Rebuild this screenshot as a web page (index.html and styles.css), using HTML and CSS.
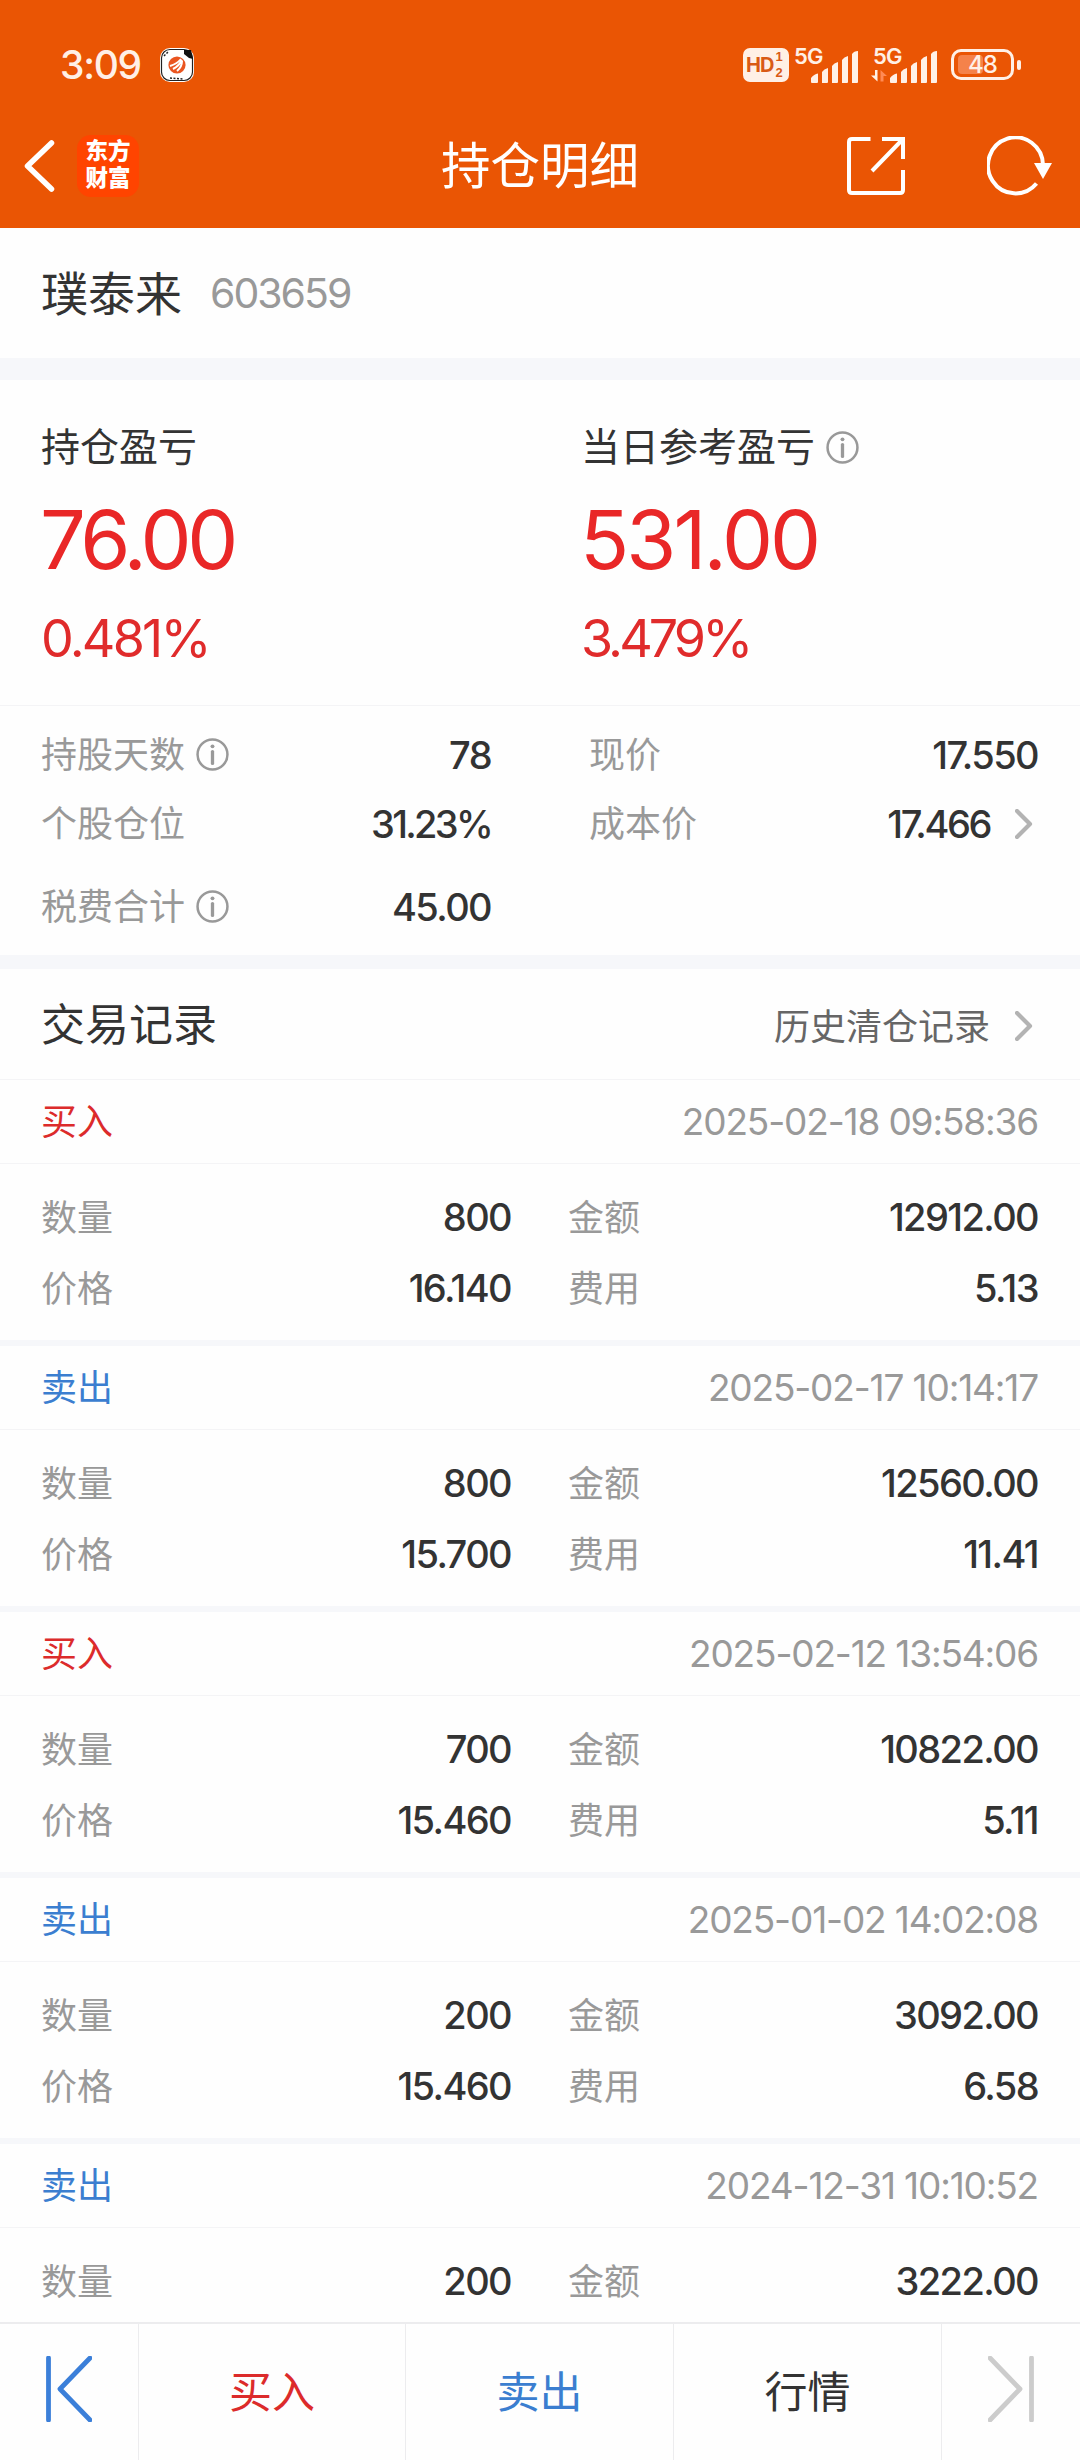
FILE: index.html
```html
<!DOCTYPE html>
<html lang="zh-CN">
<head>
<meta charset="utf-8">
<title>持仓明细</title>
<link rel="stylesheet" href="styles.css">
</head>
<body>
<svg class="defs" width="0" height="0" aria-hidden="true">
  <symbol id="info" viewBox="0 0 34 34"><circle cx="17" cy="17" r="15.4" fill="none" stroke="#999" stroke-width="2.6"/><circle cx="17" cy="8.6" r="2" fill="#999"/><path d="M17 14v12.2" stroke="#999" stroke-width="3.4" stroke-linecap="round"/></symbol>
  <symbol id="chev" viewBox="0 0 18 30"><path d="M2 2l13 13L2 28" fill="none" stroke="#b3b3b3" stroke-width="4.2" stroke-linecap="round" stroke-linejoin="round"/></symbol>
  <symbol id="bars" viewBox="0 0 48 32"><path d="M0 31v-4q3-4 7-4.500v8.500q0 1-1 1h-5q-1 0-1-1zM11 32v-11q2-3 6-4v14q0 1-1 1zM21 32v-17q2-3 6-4v20q0 1-1 1zM31 32v-23q2-3 6-4v26q0 1-1 1zM41 32v-29q2-3 6-3v31q0 1-1 1z" fill="#fff0e6"/></symbol>
</svg>
<div class="screen">
  <header class="top">
    <div class="status">
      <span class="clock">3:09</span>
      <svg class="notice" viewBox="0 0 34 34"><rect x="0" y="0" width="34" height="34" rx="10" fill="#fff"/><rect x="1.500" y="1.500" width="31" height="31" rx="8.500" fill="none" stroke="#222" stroke-width="1.200"/><path d="M24 2l7 0 2 9-4-1-5-4z" fill="#111"/><path d="M4 8l4-4M10 30l14 1" stroke="#222" stroke-width="1.500" stroke-dasharray="2 1.500"/><circle cx="17" cy="17" r="8.600" fill="#ea5520"/><path d="M10 18q7-2 11-7M13 21q6-3 9-9M17 23q5-4 5-10" stroke="#fff" stroke-width="2" fill="none"/></svg>
      <div class="signals">
        <span class="hd"><span>HD</span><span class="sims"><i>1</i><i>2</i></span></span>
        <span class="net"><b>5G</b><svg viewBox="0 0 48 32"><use href="#bars"/></svg></span>
        <span class="net second"><b>5G</b><svg class="updown" viewBox="0 0 16 12"><path d="M6.500 0v11.500L0 5.500h4V0z" fill="#fff0e6"/><path d="M9.500 11.500V0L16 6h-3.500v5.500z" fill="#ff8a55"/></svg><svg viewBox="0 0 48 32"><use href="#bars"/></svg></span>
        <span class="battery"><span class="level"></span><span class="pct">48</span></span><span class="nub"></span>
      </div>
    </div>
    <div class="nav">
      <svg class="back" viewBox="0 0 30 52"><path d="M27 3L3 26l24 23" fill="none" stroke="#fff" stroke-width="5.500" stroke-linecap="round" stroke-linejoin="round"/></svg>
      <span class="brand">东方<br>财富</span>
      <h1>持仓明细</h1>
      <svg class="share" viewBox="0 0 58 58"><path d="M23.500 2H5q-3 0-3 3v48q0 3 3 3h48q3 0 3-3V33M35 2h21v20M56 2L25 34" fill="none" stroke="#fff" stroke-width="4"/></svg>
      <svg class="reload" viewBox="0 0 66 60"><path d="M49.500 47.500A27.500 28 0 1 1 56 29" fill="none" stroke="#fff" stroke-width="4"/><path d="M47 27h18l-9 16z" fill="#fff"/></svg>
    </div>
  </header>

  <section class="stock"><span class="name">璞泰来</span><span class="code">603659</span></section>

  <section class="profit">
    <div><h2>持仓盈亏</h2><p class="big tight">76.00</p><p class="rate">0.481%</p></div>
    <div><h2>当日参考盈亏<svg class="info"><use href="#info"/></svg></h2><p class="big">531.00</p><p class="rate snug">3.479%</p></div>
  </section>

  <section class="stats">
    <div class="col left">
      <div class="stat"><span class="label">持股天数<svg class="info"><use href="#info"/></svg></span><span class="val">78</span></div>
      <div class="stat"><span class="label">个股仓位</span><span class="val percent">31.23%</span></div>
      <div class="stat tax"><span class="label">税费合计<svg class="info"><use href="#info"/></svg></span><span class="val">45.00</span></div>
    </div>
    <div class="col right">
      <div class="stat"><span class="label">现价</span><span class="val">17.550</span></div>
      <div class="stat"><span class="label">成本价</span><span class="val cost">17.466<svg class="chev"><use href="#chev"/></svg></span></div>
    </div>
  </section>

  <section class="history">
    <div class="title"><h3>交易记录</h3><a>历史清仓记录<svg class="chev"><use href="#chev"/></svg></a></div>
    <article class="record"><div class="head"><span class="buy">买入</span><time>2025-02-18 09:58:36</time></div>
      <dl><dt>数量</dt><dd>800</dd><dt>金额</dt><dd>12912.00</dd><dt>价格</dt><dd>16.140</dd><dt>费用</dt><dd>5.13</dd></dl></article>
    <article class="record"><div class="head"><span class="sell">卖出</span><time>2025-02-17 10:14:17</time></div>
      <dl><dt>数量</dt><dd>800</dd><dt>金额</dt><dd>12560.00</dd><dt>价格</dt><dd>15.700</dd><dt>费用</dt><dd>11.41</dd></dl></article>
    <article class="record"><div class="head"><span class="buy">买入</span><time>2025-02-12 13:54:06</time></div>
      <dl><dt>数量</dt><dd>700</dd><dt>金额</dt><dd>10822.00</dd><dt>价格</dt><dd>15.460</dd><dt>费用</dt><dd>5.11</dd></dl></article>
    <article class="record"><div class="head"><span class="sell">卖出</span><time>2025-01-02 14:02:08</time></div>
      <dl><dt>数量</dt><dd>200</dd><dt>金额</dt><dd>3092.00</dd><dt>价格</dt><dd>15.460</dd><dt>费用</dt><dd>6.58</dd></dl></article>
    <article class="record"><div class="head"><span class="sell">卖出</span><time>2024-12-31 10:10:52</time></div>
      <dl><dt>数量</dt><dd>200</dd><dt>金额</dt><dd>3222.00</dd></dl></article>
  </section>

  <nav class="actions">
    <span class="edge"><svg viewBox="0 0 46 66"><path d="M2.500 2v62M44 2L14 33l30 31" fill="none" stroke="#3b7fd9" stroke-width="4.800" stroke-linecap="round" stroke-linejoin="round"/></svg></span>
    <span class="buy">买入</span><span class="sell">卖出</span><span>行情</span>
    <span class="edge"><svg viewBox="0 0 46 66"><path d="M43.500 2v62M2 2l30 31L2 64" fill="none" stroke="#ccc" stroke-width="4.800" stroke-linecap="round" stroke-linejoin="round"/></svg></span>
  </nav>
</div>
</body>
</html>
```

FILE: styles.css
```css
* { box-sizing: border-box; margin: 0; padding: 0; }
body { background: #fefefe; font-family: Inter, "Noto Sans CJK SC", sans-serif; color: #333; }
.defs { display: block; height: 0; }
.screen { width: 1080px; height: 2460px; overflow: hidden; display: flex; flex-direction: column; }
h1, h2, h3 { font-weight: 400; }
svg { display: block; flex: none; }

.top { height: 228px; background: #ea5504; color: #fff; flex: none; }
.status { height: 104px; padding: 25px 59px 0 60px; display: flex; align-items: center; color: #fff0e6; }
.clock { font-size: 39px; font-weight: 500; letter-spacing: -1.300px; width: 100px; }
.notice { width: 34px; height: 34px; }
.signals { margin-left: auto; display: flex; align-items: center; }
.hd { width: 46px; height: 34px; border-radius: 7px; background: #fff0e6; color: #d95a14; display: flex; align-items: center; padding-left: 3px; font-size: 20px; font-weight: 700; letter-spacing: -1px; }
.sims { display: flex; flex-direction: column; gap: 2px; margin-left: 2px; }
.sims i { font: 700 13px/14px "Liberation Sans", sans-serif; }
.net { position: relative; width: 65px; height: 36px; margin-left: 5px; display: flex; justify-content: flex-end; align-items: flex-end; }
.net svg { width: 48px; height: 32px; }
.net b { position: absolute; left: 0; top: 0; font-size: 22px; line-height: 18px; font-weight: 600; letter-spacing: -.8px; }
.net .updown { position: absolute; left: -2px; bottom: 1px; width: 16px; height: 12px; }
.second { margin-left: 14px; }
.battery { position: relative; width: 63px; height: 31px; border: 3px solid #fff0e6; border-radius: 10px; margin-left: 13px; display: flex; align-items: center; justify-content: center; }
.level { position: absolute; left: 4px; top: 3px; width: 25px; height: 19px; background: #f5824a; border-radius: 4px; }
.pct { position: relative; font-size: 24px; font-weight: 500; line-height: 25px; letter-spacing: -1px; }
.nub { width: 4px; height: 10px; border-radius: 2px; background: #fff0e6; margin-left: 3px; }
.nav { height: 124px; padding: 0 27px 0 24px; display: flex; align-items: center; }
.back { width: 31px; height: 52px; }
.brand { width: 62px; height: 62px; margin-left: 22px; border-radius: 14px; background: #ff4400; font-size: 22.500px; line-height: 27px; font-weight: 900; text-align: center; padding-top: 2px; }
.nav h1 { font-size: 49.500px; line-height: 60px; margin-left: 302px; margin-right: 208px; white-space: nowrap; }
.share { width: 58px; height: 60px; }
.reload { width: 66px; height: 60px; margin-left: auto; }

.stock { height: 130px; padding: 0 42px; display: flex; align-items: center; flex: none; }
.name { font-size: 47px; padding-bottom: 6px; margin-left: -1px; }
.code { font-size: 41px; color: #999; margin-left: 28px; letter-spacing: -2px; }

.profit { height: 348px; border-top: 22px solid #f6f7fa; border-bottom: 1px solid #f4f4f6; padding: 43px 41px 0; display: grid; grid-template-columns: 540px 1fr; flex: none; }
.profit h2 { font-size: 39px; line-height: 48px; display: flex; align-items: center; }
.info { width: 33px; height: 33px; margin-left: 11px; }
.big { font-size: 81px; line-height: 96px; color: #e92727; letter-spacing: -2.900px; margin: 21px 0 0 -1px; }
.big.tight { letter-spacing: -4.300px; }
.rate { font-size: 52px; line-height: 60px; color: #e02b2b; letter-spacing: -2.800px; margin: 21px 0 0 0; }
.rate.snug { letter-spacing: -3.900px; }

.stats { height: 263px; border-bottom: 14px solid #f6f7fa; padding: 14px 42px 0 41px; display: flex; justify-content: space-between; flex: none; }
.col.left { width: 450px; }
.col.right { width: 449px; }
.stat { height: 69px; display: flex; align-items: center; justify-content: space-between; font-size: 36px; }
.tax { margin-top: 14px; }
.label { color: #999; display: flex; align-items: center; height: 50px; line-height: 46px; }
.val { font-size: 38px; font-weight: 500; letter-spacing: -1.600px; display: flex; align-items: center; }
.percent { letter-spacing: -2.700px; }
.cost { letter-spacing: -2.400px; }
.chev { width: 18px; height: 30px; margin-left: 25px; margin-right: 5px; }

.title { height: 111px; padding: 0 42px 5px 41px; display: flex; align-items: center; justify-content: space-between; border-bottom: 1px solid #f4f4f6; }
.title h3 { font-size: 44px; }
.title a { font-size: 36px; color: #666; display: flex; align-items: center; padding-top: 4px; }
.title .chev { margin-top: 4px; }
.record { height: 266px; border-bottom: 6px solid #f6f7fa; }
.head { height: 84px; padding: 0 42px 0 41px; display: flex; align-items: center; justify-content: space-between; border-bottom: 1px solid #f4f4f6; font-size: 36px; }
.head span { padding-bottom: 5px; }
time { font-size: 37px; color: #999; letter-spacing: -1.150px; }
.buy { color: #dc2b2b; }
.sell { color: #3b7ed0; }
dl { padding: 17px 42px 0 41px; display: grid; grid-template-columns: 100px 370px 157px 370px; grid-auto-rows: 71px; align-items: center; font-size: 36px; }
dt { color: #999; padding-bottom: 4px; }
dt:nth-of-type(even) { padding-left: 57px; }
dd { font-size: 38px; font-weight: 500; letter-spacing: -1.600px; text-align: right; }
.history { height: 1353px; overflow: hidden; flex: none; }

.actions { height: 138px; border-top: 2px solid #ececee; display: grid; grid-template-columns: 139px 267px 268px 268px 138px; flex: none; font-size: 43px; background: #fefefe; }
.actions > span { display: flex; align-items: center; justify-content: center; border-right: 1px solid #ececee; padding-bottom: 6px; }
.actions > span:last-child { border-right: 0; }
.actions svg { width: 46px; height: 66px; }
```
